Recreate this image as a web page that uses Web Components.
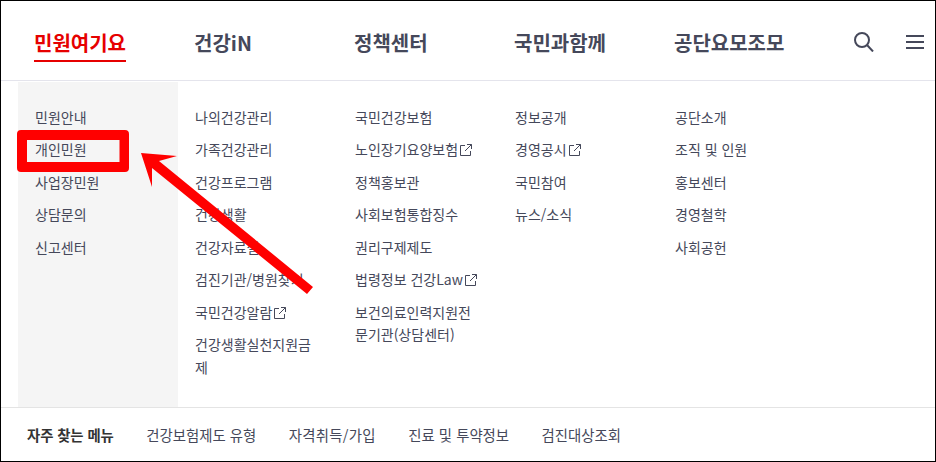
<!DOCTYPE html>
<html lang="ko">
<head>
<meta charset="utf-8">
<title>민원여기요</title>
<style>
  html, body { margin: 0; background: #fff; }
  body { font-family: "Noto Sans CJK KR", "Noto Sans", sans-serif; }
</style>
</head>
<body>
<site-menu>
  <nav-bar slot="nav">
    <nav-tab active>민원여기요</nav-tab>
    <nav-tab>건강iN</nav-tab>
    <nav-tab>정책센터</nav-tab>
    <nav-tab>국민과함께</nav-tab>
    <nav-tab>공단요모조모</nav-tab>
  </nav-bar>
  <menu-col slot="cols" shaded>
    <menu-link>민원안내</menu-link>
    <menu-link>개인민원</menu-link>
    <menu-link>사업장민원</menu-link>
    <menu-link>상담문의</menu-link>
    <menu-link>신고센터</menu-link>
  </menu-col>
  <menu-col slot="cols">
    <menu-link>나의건강관리</menu-link>
    <menu-link>가족건강관리</menu-link>
    <menu-link>건강프로그램</menu-link>
    <menu-link>건강생활</menu-link>
    <menu-link>건강자료실</menu-link>
    <menu-link>검진기관/병원찾기</menu-link>
    <menu-link ext>국민건강알람</menu-link>
    <menu-link>건강생활실천지원금제</menu-link>
  </menu-col>
  <menu-col slot="cols">
    <menu-link>국민건강보험</menu-link>
    <menu-link ext>노인장기요양보험</menu-link>
    <menu-link>정책홍보관</menu-link>
    <menu-link>사회보험통합징수</menu-link>
    <menu-link>권리구제제도</menu-link>
    <menu-link ext>법령정보 건강Law</menu-link>
    <menu-link>보건의료인력지원전문기관(상담센터)</menu-link>
  </menu-col>
  <menu-col slot="cols">
    <menu-link>정보공개</menu-link>
    <menu-link ext>경영공시</menu-link>
    <menu-link>국민참여</menu-link>
    <menu-link>뉴스/소식</menu-link>
  </menu-col>
  <menu-col slot="cols">
    <menu-link>공단소개</menu-link>
    <menu-link>조직 및 인원</menu-link>
    <menu-link>홍보센터</menu-link>
    <menu-link>경영철학</menu-link>
    <menu-link>사회공헌</menu-link>
  </menu-col>
  <quick-bar slot="quick">
    <a>건강보험제도 유형</a>
    <a style="letter-spacing: .3px">자격취득/가입</a>
    <a>진료 및 투약정보</a>
    <a>검진대상조회</a>
  </quick-bar>
</site-menu>
<red-callout></red-callout>

<script>
class SiteMenu extends HTMLElement {
  constructor() {
    super();
    this.attachShadow({ mode: "open" });
    this.shadowRoot.innerHTML = `
      <style>
        :host {
          display: flex;
          flex-direction: column;
          box-sizing: border-box;
          width: 936px;
          height: 462px;
          border: 1px solid #000;
          background: #fff;
          color: #45485a;
        }
        .cols {
          flex: 1;
          display: flex;
          padding-left: 17px;
          padding-top: 1px;
          min-height: 0;
        }
      </style>
      <slot name="nav"></slot>
      <div class="cols"><slot name="cols"></slot></div>
      <slot name="quick"></slot>
    `;
  }
}

class NavBar extends HTMLElement {
  constructor() {
    super();
    this.attachShadow({ mode: "open" });
    this.shadowRoot.innerHTML = `
      <style>
        :host {
          display: flex;
          align-items: flex-start;
          height: 80px;
          box-sizing: border-box;
          padding-left: 33px;
          border-bottom: 1px solid #e4e4ec;
        }
        .tools {
          display: flex;
          align-items: center;
          gap: 32px;
          margin-left: 20px;
          height: 78px;
          padding-top: 2px;
        }
        svg { display: block; }
      </style>
      <slot></slot>
      <div class="tools">
        <svg width="20" height="20" viewBox="0 0 20 20" fill="none" stroke="#45485a" stroke-width="2">
          <circle cx="8" cy="8" r="7"/>
          <path d="M13 13l6 6.5"/>
        </svg>
        <svg width="18" height="14" viewBox="0 0 18 14" fill="none" stroke="#45485a" stroke-width="2">
          <path d="M0 1h18M0 7h18M0 13h18"/>
        </svg>
      </div>
    `;
  }
}

class NavTab extends HTMLElement {
  constructor() {
    super();
    this.attachShadow({ mode: "open" });
    this.shadowRoot.innerHTML = `
      <style>
        :host {
          display: block;
          flex: none;
          width: 160px;
          padding-top: 27px;
          font-size: 20px;
          font-weight: 700;
          line-height: 30px;
          color: #45485a;
        }
        span { display: inline-block; padding-bottom: 2px; border-bottom: 2px solid transparent; }
        :host([active]) { color: #e60000; }
        :host([active]) span { border-bottom-color: #e60000; }
      </style>
      <span><slot></slot></span>
    `;
  }
}

class MenuCol extends HTMLElement {
  constructor() {
    super();
    this.attachShadow({ mode: "open" });
    this.shadowRoot.innerHTML = `
      <style>
        :host {
          display: flex;
          flex-direction: column;
          gap: 10px;
          box-sizing: border-box;
          width: 160px;
          padding: 23.75px 18px 0 17px;
        }
        :host([shaded]) { background: #f5f5f5; }
      </style>
      <slot></slot>
    `;
  }
}

const extIcon = `<svg width="12" height="12" viewBox="0 0 12 12" fill="none" stroke="currentColor" stroke-width="1">
  <path d="M5 1.5H.5v10h10V7M7 .5h4.5V5M11.5.5L5 7"/>
</svg>`;

class MenuLink extends HTMLElement {
  constructor() {
    super();
    this.attachShadow({ mode: "open" });
    this.shadowRoot.innerHTML = `
      <style>
        :host {
          display: block;
          font-size: 14px;
          line-height: 22.5px;
          word-break: break-all;
          color: #45485a;
        }
        svg { margin-left: 2px; vertical-align: -1px; }
      </style>
      <slot></slot>${this.hasAttribute("ext") ? extIcon : ""}
    `;
  }
}

class QuickBar extends HTMLElement {
  constructor() {
    super();
    this.attachShadow({ mode: "open" });
    this.shadowRoot.innerHTML = `
      <style>
        :host {
          display: flex;
          align-items: center;
          gap: 32.5px;
          height: 54px;
          box-sizing: border-box;
          padding: 0 0 0 26px;
          border-top: 1px solid #e4e4e4;
          font-size: 14.4px;
          color: #45485a;
        }
        strong { color: #333; font-weight: 700; letter-spacing: -.1px; }
        ::slotted(a) { color: #45485a; }
      </style>
      <strong>자주 찾는 메뉴</strong>
      <slot></slot>
    `;
  }
}

// the red box and arrow drawn over the screenshot
class RedCallout extends HTMLElement {
  constructor() {
    super();
    this.attachShadow({ mode: "open" });
    this.shadowRoot.innerHTML = `
      <style>
        :host { position: absolute; left: 0; top: 0; width: 936px; height: 462px; pointer-events: none; }
        svg { display: block; }
      </style>
      <svg width="936" height="462" viewBox="0 0 936 462">
        <path fill="#f00" fill-rule="evenodd" d="M21 130h104a4 4 0 0 1 4 4v34a4 4 0 0 1-4 4H21a4 4 0 0 1-4-4v-34a4 4 0 0 1 4-4zM27 140v22h92.500v-22z"/>
        <polygon fill="#f00" points="141,153 177,156 159,161 313,287 307,294 152,168 152,187"/>
      </svg>
    `;
  }
}

customElements.define("site-menu", SiteMenu);
customElements.define("nav-bar", NavBar);
customElements.define("nav-tab", NavTab);
customElements.define("menu-col", MenuCol);
customElements.define("menu-link", MenuLink);
customElements.define("quick-bar", QuickBar);
customElements.define("red-callout", RedCallout);
</script>
</body>
</html>
